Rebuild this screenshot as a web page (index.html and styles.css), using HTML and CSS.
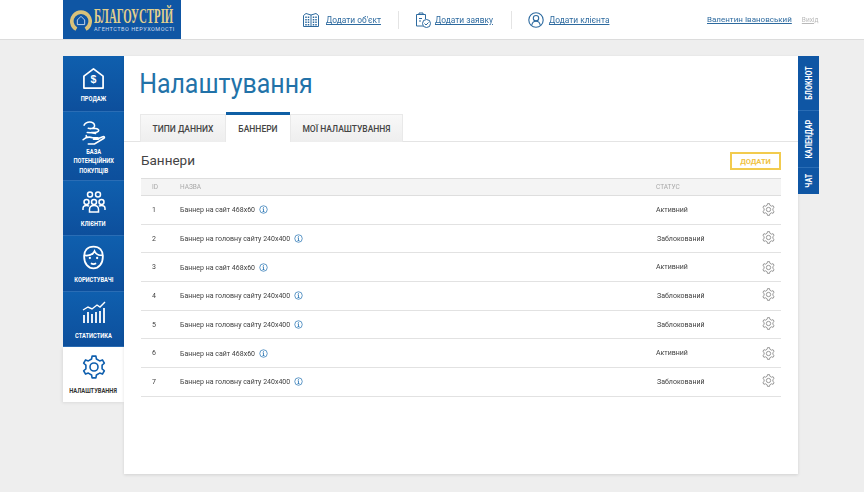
FILE: index.html
```html
<!DOCTYPE html>
<html lang="uk">
<head>
    <meta charset="UTF-8">
    <title>Налаштування</title>
    <link rel="stylesheet" href="styles.css">
</head>
<body>

<svg class="sprite" width="0" height="0">
    <symbol id="gear" viewBox="0 0 24 24">
        <path fill="none" stroke="currentColor" stroke-width="1.6" stroke-linejoin="round" d="M9.57 4.06 10.09 1.17H13.91L14.43 4.06 17.66 5.93 20.43 4.93 22.34 8.24 20.09 10.13V13.87L22.34 15.76 20.43 19.07 17.66 18.07 14.43 19.94 13.91 22.83H10.09L9.57 19.94 6.34 18.07 3.57 19.07 1.66 15.76 3.91 13.87V10.13L1.66 8.24 3.57 4.93 6.34 5.93z"/>
        <circle cx="12" cy="12" r="4" fill="none" stroke="currentColor" stroke-width="1.6"/>
    </symbol>
    <symbol id="info" viewBox="0 0 12 12">
        <circle cx="6" cy="6" r="5" fill="none" stroke="currentColor" stroke-width="1"/>
        <path fill="currentColor" d="M5.4 2.5h1.2v1.2H5.4zM4.8 4.7h1.8v3.6h.7v.9H4.7v-.9h.8V5.6h-.7z"/>
    </symbol>
</svg>

<header class="top-bar">
    <a class="logo" href="#">
        <svg class="logo-mark" viewBox="0 0 24 24" width="22" height="22">
            <path fill="none" stroke="#d9c27a" stroke-width="4" d="M7 22A10 10 0 1 1 17 22"/>
            <path fill="none" stroke="#cfdcec" stroke-width="1" d="M8 12l4-4 4 4v5H8z"/>
        </svg>
        <span class="logo-text">
            <span class="logo-name">БЛАГОУСТРІЙ</span>
            <span class="logo-sub">АГЕНТСТВО НЕРУХОМОСТІ</span>
        </span>
    </a>

    <nav class="quick-links">
        <a class="quick-link" href="#">
            <svg viewBox="0 0 16 16" width="16" height="16"><path fill="none" stroke="#2d6a9f" d="M.5 3.500 3 1.500 8 3l5-1.500 2.500 2v11H.5zM8 3v12"/><path stroke="#2d6a9f" stroke-width="1.500" stroke-dasharray="1.500 1" d="M3 4.500v9M5.500 4.500v9M10.500 4.500v9M13 4.500v9"/></svg>
            <span>Додати об'єкт</span>
        </a>
        <a class="quick-link" href="#">
            <svg viewBox="0 0 16 16" width="16" height="16"><path fill="none" stroke="#2d6a9f" d="M8 14H1.500V2.500h9V7M4 2.500V1h4v1.500M4 6.500h3M4 9h2"/><circle cx="11.500" cy="11.500" r="4" fill="#fff" stroke="#2d6a9f"/><path fill="none" stroke="#2d6a9f" d="M9.500 11.500l1.500 1.500 2.500-2.500"/></svg>
            <span>Додати заявку</span>
        </a>
        <a class="quick-link" href="#">
            <svg viewBox="0 0 16 16" width="16" height="16"><circle cx="8" cy="8" r="7.200" fill="none" stroke="#2d6a9f" stroke-width="1.100"/><circle cx="8" cy="6.200" r="2.700" fill="none" stroke="#2d6a9f" stroke-width="1.100"/><path fill="none" stroke="#2d6a9f" stroke-width="1.100" d="M3.800 13c.5-3 2-3.800 4.200-3.800s3.700.8 4.200 3.800"/></svg>
            <span>Додати клієнта</span>
        </a>
    </nav>

    <div class="user-box">
        <a class="user-name" href="#">Валентин Івановський</a>
        <a class="logout" href="#">Вихід</a>
    </div>
</header>

<div class="page">
    <aside class="side-menu">
        <a class="side-item" href="#">
            <svg viewBox="0 0 24 24" width="23" height="23"><path fill="none" stroke="#fff" stroke-width="1.800" stroke-linejoin="round" d="M2 9.500 12 2l10 7.500V22H2z"/><text class="icon-dollar" x="12" y="17" text-anchor="middle">$</text></svg>
            <span>Продаж</span>
        </a>
        <a class="side-item side-item-tall" href="#">
            <svg viewBox="0 0 24 24" width="25" height="25"><path fill="none" stroke="#fff" stroke-width="1.500" stroke-linecap="round" d="M3 5c2-4 9-4 10 0 .5 2-2 4-6 3M7 8c5 0 10 0 10 2s-5 2-7 2M6 12c2 0 6 .5 8 1M5 15c0 1 .5 1.500 2 1.500M2 19c3-3 6-3 9-2h5c1.500 0 1.500 1.500 0 1.500h-4M16 18l5-2c1.500-.5 2 1 1 1.500L13 23H7"/></svg>
            <span>База потенційних покупців</span>
        </a>
        <a class="side-item side-item-clients" href="#">
            <svg viewBox="0 0 24 24" width="24" height="24"><g fill="none" stroke="#fff" stroke-width="1.500"><circle cx="8" cy="4.500" r="2.500"/><circle cx="16" cy="4.500" r="2.500"/><circle cx="12" cy="12" r="2.500"/><circle cx="4.500" cy="12" r="2.500"/><circle cx="19.500" cy="12" r="2.500"/><path d="M7.500 22v-2.500c0-3 2-4 4.500-4s4.500 1 4.500 4V22zM1 20v-1.500c0-2 1.500-3 3.500-3 1 0 2 .3 2.500.8M23 20v-1.500c0-2-1.500-3-3.500-3-1 0-2 .3-2.500.8"/></g></svg>
            <span>Клієнти</span>
        </a>
        <a class="side-item side-item-users" href="#">
            <svg viewBox="0 0 24 24" width="25" height="25"><g fill="none" stroke="#fff" stroke-width="1.700"><path d="M12 1.500c6 0 9 4 9 9.500 0 7-4 11.500-9 11.500S3 18 3 11c0-5.500 3-9.500 9-9.500z"/><path d="M3.500 10c4 .5 8-1 9.500-4 1 2.500 3.500 4 7.500 4M9.500 17.500c1.600 1 3.400 1 5 0"/></g><circle cx="8.500" cy="12.500" r="1.100" fill="#fff"/><circle cx="15.500" cy="12.500" r="1.100" fill="#fff"/></svg>
            <span>Користувачі</span>
        </a>
        <a class="side-item side-item-stats" href="#">
            <svg viewBox="0 0 24 24" width="24" height="24"><path fill="none" stroke="#fff" stroke-width="1.400" d="M1 10l5-3 4 2 5-4 3 2 5-5"/><path fill="none" stroke="#fff" stroke-width="1.800" d="M2 23v-8M6 23V12M10 23v-9M14 23v-11M18 23V11M22 23V8"/></svg>
            <span>Статистика</span>
        </a>
        <a class="side-item side-item-active" href="#">
            <svg width="24" height="24"><use href="#gear"/></svg>
            <span>Налаштування</span>
        </a>
    </aside>

    <main class="content">
        <h1>Налаштування</h1>

        <div class="tabs">
            <a class="tab tab-types" href="#">Типи данних</a>
            <a class="tab tab-active" href="#">Баннери</a>
            <a class="tab tab-mine" href="#">Мої налаштування</a>
        </div>

        <section class="panel">
            <div class="panel-head">
                <h2>Баннери</h2>
                <button class="btn-add" type="button">Додати</button>
            </div>

            <table class="banners">
                <thead>
                    <tr>
                        <th class="col-id">ID</th>
                        <th class="col-name">Назва</th>
                        <th class="col-status">Статус</th>
                        <th class="col-gear"></th>
                    </tr>
                </thead>
                <tbody>
                    <tr>
                        <td class="col-id">1</td>
                        <td>Баннер на сайт 468x60 <svg class="info" width="9" height="9"><use href="#info"/></svg></td>
                        <td>Активний</td>
                        <td class="col-gear"><svg class="gear" width="13" height="13"><use href="#gear"/></svg></td>
                    </tr>
                    <tr class="row-locked">
                        <td class="col-id">2</td>
                        <td>Баннер на головну сайту 240x400 <svg class="info" width="9" height="9"><use href="#info"/></svg></td>
                        <td>Заблокований</td>
                        <td class="col-gear"><svg class="gear" width="13" height="13"><use href="#gear"/></svg></td>
                    </tr>
                    <tr>
                        <td class="col-id">3</td>
                        <td>Баннер на сайт 468x60 <svg class="info" width="9" height="9"><use href="#info"/></svg></td>
                        <td>Активний</td>
                        <td class="col-gear"><svg class="gear" width="13" height="13"><use href="#gear"/></svg></td>
                    </tr>
                    <tr class="row-locked">
                        <td class="col-id">4</td>
                        <td>Баннер на головну сайту 240x400 <svg class="info" width="9" height="9"><use href="#info"/></svg></td>
                        <td>Заблокований</td>
                        <td class="col-gear"><svg class="gear" width="13" height="13"><use href="#gear"/></svg></td>
                    </tr>
                    <tr class="row-locked">
                        <td class="col-id">5</td>
                        <td>Баннер на головну сайту 240x400 <svg class="info" width="9" height="9"><use href="#info"/></svg></td>
                        <td>Заблокований</td>
                        <td class="col-gear"><svg class="gear" width="13" height="13"><use href="#gear"/></svg></td>
                    </tr>
                    <tr>
                        <td class="col-id">6</td>
                        <td>Баннер на сайт 468x60 <svg class="info" width="9" height="9"><use href="#info"/></svg></td>
                        <td>Активний</td>
                        <td class="col-gear"><svg class="gear" width="13" height="13"><use href="#gear"/></svg></td>
                    </tr>
                    <tr class="row-locked">
                        <td class="col-id">7</td>
                        <td>Баннер на головну сайту 240x400 <svg class="info" width="9" height="9"><use href="#info"/></svg></td>
                        <td>Заблокований</td>
                        <td class="col-gear"><svg class="gear" width="13" height="13"><use href="#gear"/></svg></td>
                    </tr>
                </tbody>
            </table>
        </section>
    </main>

    <aside class="side-tabs">
        <a class="side-tab side-tab-note" href="#"><span>Блокнот</span></a>
        <a class="side-tab side-tab-cal" href="#"><span>Календар</span></a>
        <a class="side-tab side-tab-chat" href="#"><span>Чат</span></a>
    </aside>
</div>

</body>
</html>
```

FILE: styles.css
```css
/* Base */
* {
    box-sizing: border-box;
    margin: 0;
    padding: 0;
}

html, body {
    height: 100%;
}

body {
    font-family: Roboto, 'Noto Sans', sans-serif;
    background-color: #eeeeee;
    color: #333;
    overflow: hidden;
}

a {
    color: inherit;
    text-decoration: none;
}

.sprite {
    display: block;
    height: 0;
}

/* Top bar */
.top-bar {
    display: flex;
    align-items: center;
    height: 40px;
    padding-left: 63px;
    background-color: #fff;
    border-bottom: 1px solid #dcdcdc;
}

.logo {
    display: flex;
    align-items: center;
    gap: 2px;
    width: 118px;
    height: 39px;
    padding-left: 7px;
    background-color: #0f56a4;
}

.logo-mark {
    flex: none;
}

.logo-text {
    display: flex;
    flex-direction: column;
}

.logo-name {
    display: block;
    width: 82px;
    font-family: 'Liberation Serif', serif;
    font-size: 20px;
    font-weight: 700;
    line-height: 19px;
    color: #e3d08c;
    white-space: nowrap;
    transform: scaleX(.54);
    transform-origin: left center;
}

.logo-sub {
    font-size: 5.500px;
    line-height: 6px;
    letter-spacing: .5px;
    color: #cfdcec;
    white-space: nowrap;
}

.quick-links {
    display: flex;
    align-items: center;
    margin-left: 122px;
    will-change: transform;
}

.quick-link {
    display: flex;
    align-items: center;
    gap: 7px;
    height: 18px;
    padding-right: 17px;
    margin-right: 16px;
    border-right: 1px solid #e4e4e4;
    font-size: 8.400px;
    color: #2d6a9f;
}

.quick-link span {
    text-decoration: underline;
}

.quick-link:nth-child(2) {
    gap: 4px;
    padding-right: 18px;
}

.quick-link:last-child {
    gap: 5px;
    padding-right: 0;
    margin-right: 0;
    border-right: none;
}

.user-box {
    display: flex;
    align-items: center;
    gap: 10px;
    margin-left: 98px;
    will-change: transform;
}

.user-name {
    font-size: 8px;
    color: #2d6a9f;
    text-decoration: underline;
}

.logout {
    font-size: 6.500px;
    color: #b9b9b9;
    text-decoration: underline;
}

/* Page */
.page {
    display: flex;
    align-items: flex-start;
    padding: 16px 0 0 63px;
}

/* Left menu */
.side-menu {
    width: 61px;
    flex: none;
}

.side-item {
    display: flex;
    flex-direction: column;
    align-items: center;
    height: 55.500px;
    padding-top: 11px;
    background: linear-gradient(#0f5fae, #0d4f9c);
    border-bottom: 1px solid #2a6db5;
    color: #fff;
    text-align: center;
    font-size: 7px;
    font-weight: 700;
    line-height: 9.500px;
    text-transform: uppercase;
}

.side-item span {
    margin-top: 5px;
    transform: scaleX(.82);
}

.side-item-tall {
    height: 69px;
    padding-top: 8px;
}

.side-item-tall span {
    margin-top: 3px;
    padding: 0 6px;
}

.side-item-clients {
    padding-top: 9px;
}

.side-item-clients span {
    margin-top: 6px;
}

.side-item-users {
    padding-top: 9px;
}

.side-item-users span {
    margin-top: 6px;
}

.side-item-stats {
    padding-top: 8px;
}

.side-item-stats span {
    margin-top: 8px;
}

.side-item-active {
    height: 55px;
    padding-top: 8px;
    background: #fff;
    border-bottom: none;
    color: #333;
    box-shadow: -1px 1px 3px rgba(0, 0, 0, .08);
}

.side-item-active svg {
    color: #0f5fae;
}

.side-item-active span {
    margin-top: 8px;
}

.icon-dollar {
    font-family: 'Liberation Sans', sans-serif;
    font-size: 11px;
    font-weight: 700;
    fill: #fff;
}

/* Content */
.content {
    width: 674px;
    height: 418px;
    flex: none;
    background-color: #fff;
    box-shadow: 0 1px 3px rgba(0, 0, 0, .12);
}

h1 {
    padding: 9px 0 0 17px;
    height: 56px;
    font-size: 28px;
    font-weight: 400;
    line-height: 38px;
    color: #2272a8;
    transform: scaleX(.89);
    transform-origin: left center;
}

.tabs {
    display: flex;
    align-items: flex-end;
    height: 30px;
    padding-left: 16px;
    border-bottom: 1px solid #e4e4e4;
}

.tab {
    display: flex;
    align-items: center;
    justify-content: center;
    height: 28px;
    margin-bottom: -1px;
    background: linear-gradient(#f8f8f8, #eeeeee);
    border: 1px solid #e9e9e9;
    border-bottom: none;
    font-size: 8.500px;
    font-weight: 500;
    text-transform: uppercase;
    color: #444;
}

.tab-types {
    width: 86px;
}

.tab-mine {
    width: 113px;
}

.tab-active {
    width: 64px;
    height: 30px;
    background: #fff;
    border: none;
    border-top: 3px solid #0f5fa5;
}

.panel {
    padding: 0 17px;
}

.panel-head {
    display: flex;
    align-items: center;
    justify-content: space-between;
    height: 36px;
}

h2 {
    font-size: 13.500px;
    font-weight: 400;
    color: #444;
}

.btn-add {
    width: 51px;
    height: 18px;
    margin-top: 2px;
    background: #fff;
    border: 2px solid #f2cb4e;
    font-family: inherit;
    font-size: 7.500px;
    font-weight: 700;
    text-transform: uppercase;
    color: #f0c241;
}

/* Table */
.banners {
    width: 640px;
    border-collapse: collapse;
    table-layout: fixed;
    font-size: 7px;
    color: #3f3f3f;
    will-change: transform;
}

.banners th {
    height: 17px;
    background-color: #f4f4f4;
    border-top: 1px solid #dedede;
    border-bottom: 1px solid #dedede;
    font-size: 6.500px;
    font-weight: 400;
    text-align: left;
    text-transform: uppercase;
    color: #a9a9a9;
}

.banners td {
    height: 28.700px;
    border-bottom: 1px solid #e2e2e2;
}

.banners .col-id {
    width: 39px;
    padding-left: 11px;
}

.col-status {
    width: 100px;
}

.banners .col-name {
    width: 476px;
}

.col-gear {
    width: 25px;
}

.banners td.col-gear {
    padding-left: 6px;
}

.row-locked td:nth-child(3) {
    padding-left: 1px;
}

.info {
    margin-left: 2px;
    vertical-align: -2px;
    color: #2d78b5;
}

.gear {
    display: block;
    color: #8b8b8b;
}

.row-locked .gear {
    margin-bottom: 3px;
}

/* Right tabs */
.side-tabs {
    width: 21px;
    flex: none;
}

.side-tab {
    display: flex;
    align-items: center;
    justify-content: center;
    background-color: #0f56a4;
    border-bottom: 1px solid #2a6db5;
    color: #fff;
    font-size: 9px;
    font-weight: 700;
    text-transform: uppercase;
}

.side-tab span {
    writing-mode: vertical-rl;
    transform: rotate(180deg) scaleY(.8);
}

.side-tab-note {
    height: 55px;
}

.side-tab-cal {
    height: 57px;
}

.side-tab-chat {
    height: 26px;
    border-bottom: none;
}
```
